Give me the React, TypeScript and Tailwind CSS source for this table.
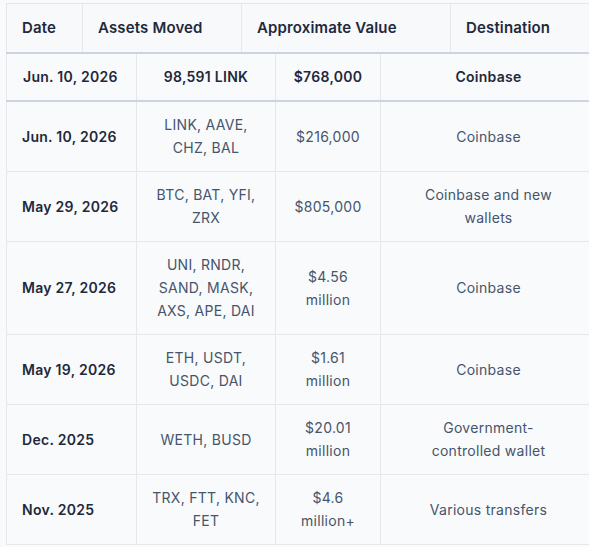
const HEAD = ["Date", "Assets Moved", "Approximate Value", "Destination"]

const ROWS = [
  { date: "Jun. 10, 2026", assets: "LINK, AAVE,\nCHZ, BAL", value: "$216,000", dest: "Coinbase" },
  { date: "May 29, 2026", assets: "BTC, BAT, YFI,\nZRX", value: "$805,000", dest: "Coinbase and new\nwallets" },
  { date: "May 27, 2026", assets: "UNI, RNDR,\nSAND, MASK,\nAXS, APE, DAI", value: "$4.56\nmillion", dest: "Coinbase" },
  { date: "May 19, 2026", assets: "ETH, USDT,\nUSDC, DAI", value: "$1.61\nmillion", dest: "Coinbase" },
  { date: "Dec. 2025", assets: "WETH, BUSD", value: "$20.01\nmillion", dest: "Government-\ncontrolled wallet" },
  { date: "Nov. 2025", assets: "TRX, FTT, KNC,\nFET", value: "$4.6\nmillion+", dest: "Various transfers" },
]

export default function App() {
  return (
    <div
      className="w-[589px] h-[547px] overflow-hidden bg-[#f9fafb] pt-[3px] pl-[6px]"
      style={{ fontFamily: "Inter, 'Noto Sans', sans-serif" }}
    >
      <div className="w-[590px]">
        <table className="table-fixed border-collapse w-full">
          <colgroup>
            <col className="w-[76px]" />
            <col className="w-[159px]" />
            <col className="w-[209px]" />
            <col />
          </colgroup>
          <thead>
            <tr className="bg-[#f8f9fb] border-t border-[#e5e7eb]">
              {HEAD.map((h) => (
                <th
                  key={h}
                  className="h-[48px] px-[15px] text-left text-[15px] font-semibold tracking-[0.01em] text-[#1e293b] whitespace-nowrap border-l border-[#e5e7eb]"
                >
                  {h}
                </th>
              ))}
            </tr>
          </thead>
        </table>
        <table className="table-fixed border-collapse w-full border-t-2 border-[#cbd5e1]">
          <colgroup>
            <col className="w-[130px]" />
            <col className="w-[139px]" />
            <col className="w-[105px]" />
            <col />
          </colgroup>
          <tbody className="text-[14px] leading-[23px] tracking-[0.02em]">
            <tr className="border-b-2 border-[#cbd5e1] font-semibold text-[#1e293b]">
              <td className="h-[48px] pl-[16px] border-l border-[#e5e7eb]">Jun. 10, 2026</td>
              <td className="text-center border-l border-[#e5e7eb]">98,591 LINK</td>
              <td className="text-center border-l border-[#e5e7eb]">$768,000</td>
              <td className="text-center border-l border-[#e5e7eb]">Coinbase</td>
            </tr>
            {ROWS.map((r) => (
              <tr key={r.date + r.assets} className="border-b border-[#e5e7eb]">
                <td className="py-[11.5px] pl-[15px] border-l border-[#e5e7eb] font-semibold text-[#1e293b]">{r.date}</td>
                <td className="py-[11.5px] px-2 text-center whitespace-pre-line text-slate-600 border-l border-[#e5e7eb]">{r.assets}</td>
                <td className="py-[11.5px] px-2 text-center whitespace-pre-line text-slate-600 border-l border-[#e5e7eb]">{r.value}</td>
                <td className="py-[11.5px] px-2 text-center whitespace-pre-line text-slate-600 border-l border-[#e5e7eb]">{r.dest}</td>
              </tr>
            ))}
          </tbody>
        </table>
      </div>
    </div>
  )
}
